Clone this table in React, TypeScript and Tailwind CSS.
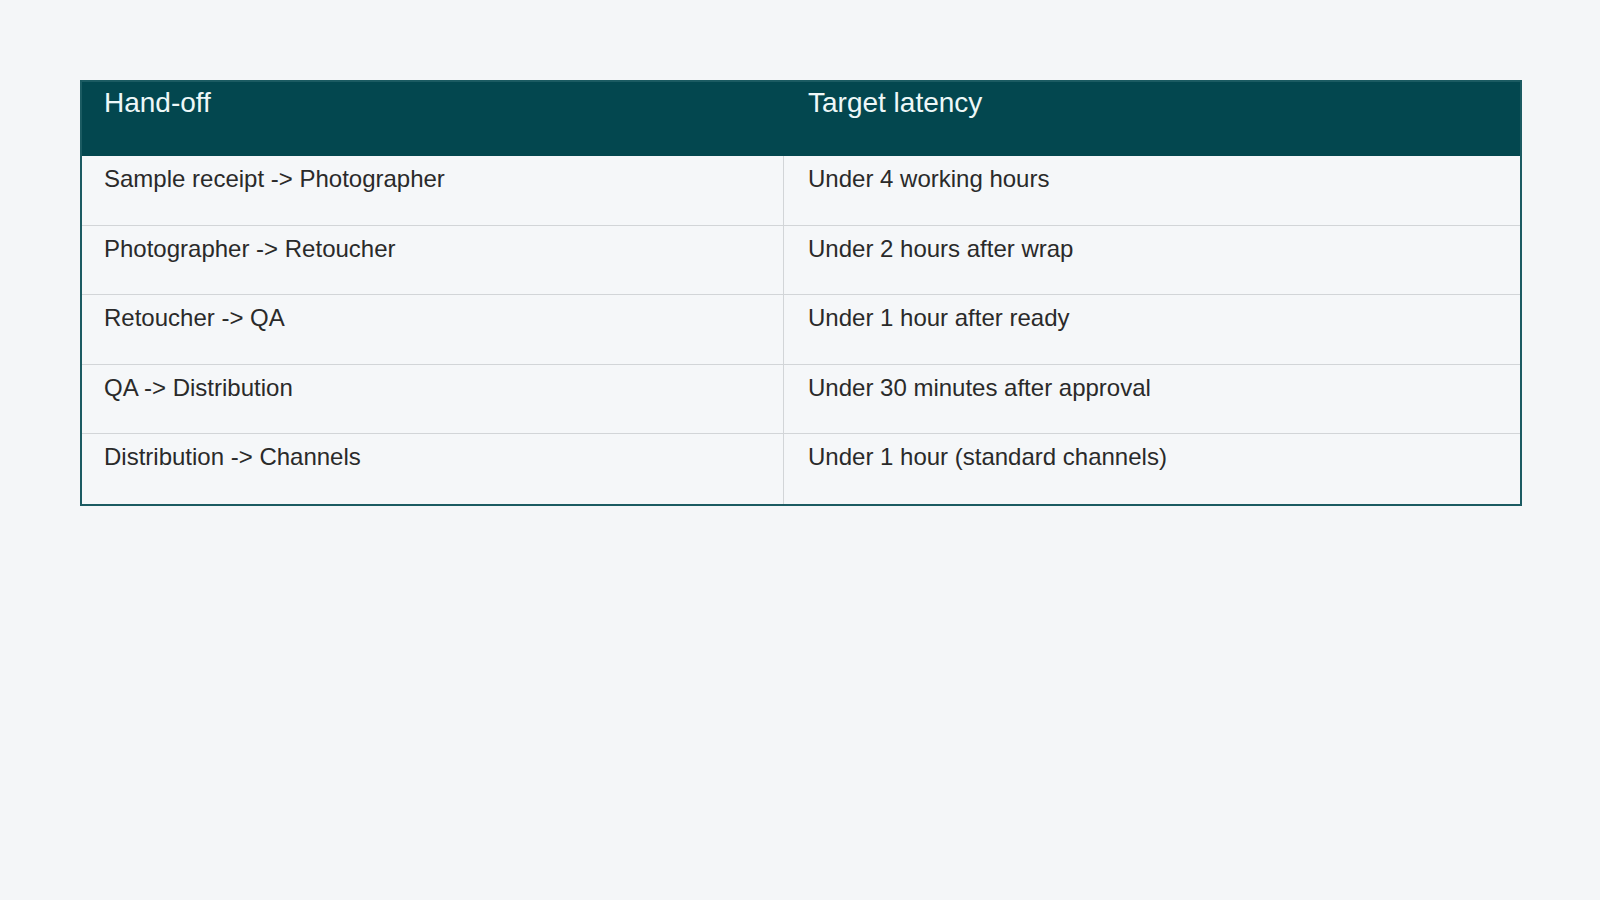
const rows = [
  ["Sample receipt -> Photographer", "Under 4 working hours"],
  ["Photographer -> Retoucher", "Under 2 hours after wrap"],
  ["Retoucher -> QA", "Under 1 hour after ready"],
  ["QA -> Distribution", "Under 30 minutes after approval"],
  ["Distribution -> Channels", "Under 1 hour (standard channels)"]
];

export default function App() {
  return (
    <div className="min-h-screen bg-[#f4f6f8] pl-20 pr-[78px] pt-20 font-['Liberation_Sans',Arial,sans-serif]">
      <div className="border-2 border-[#1b5b62] bg-[#f5f7f9]">
        <div className="flex h-[74px] bg-[#03474f] text-[28px] leading-[1.2] text-[#eef8f8]">
          <div className="w-[702px] pl-[22px] pt-[4px]">Hand-off</div>
          <div className="flex-1 pl-[24px] pt-[4px]">Target latency</div>
        </div>
        {rows.map(([from, latency], i) => (
          <div
            key={from}
            className={`flex h-[69.6px] text-[24px] leading-[1.2] text-[#2a2a2a] ${i < rows.length - 1 ? "border-b border-[#d2d5d8]" : ""}`}
          >
            <div className="w-[702px] border-r border-[#d2d5d8] pl-[22px] pt-[9px]">{from}</div>
            <div className="flex-1 pl-[24px] pt-[9px]">{latency}</div>
          </div>
        ))}
      </div>
    </div>
  );
}
